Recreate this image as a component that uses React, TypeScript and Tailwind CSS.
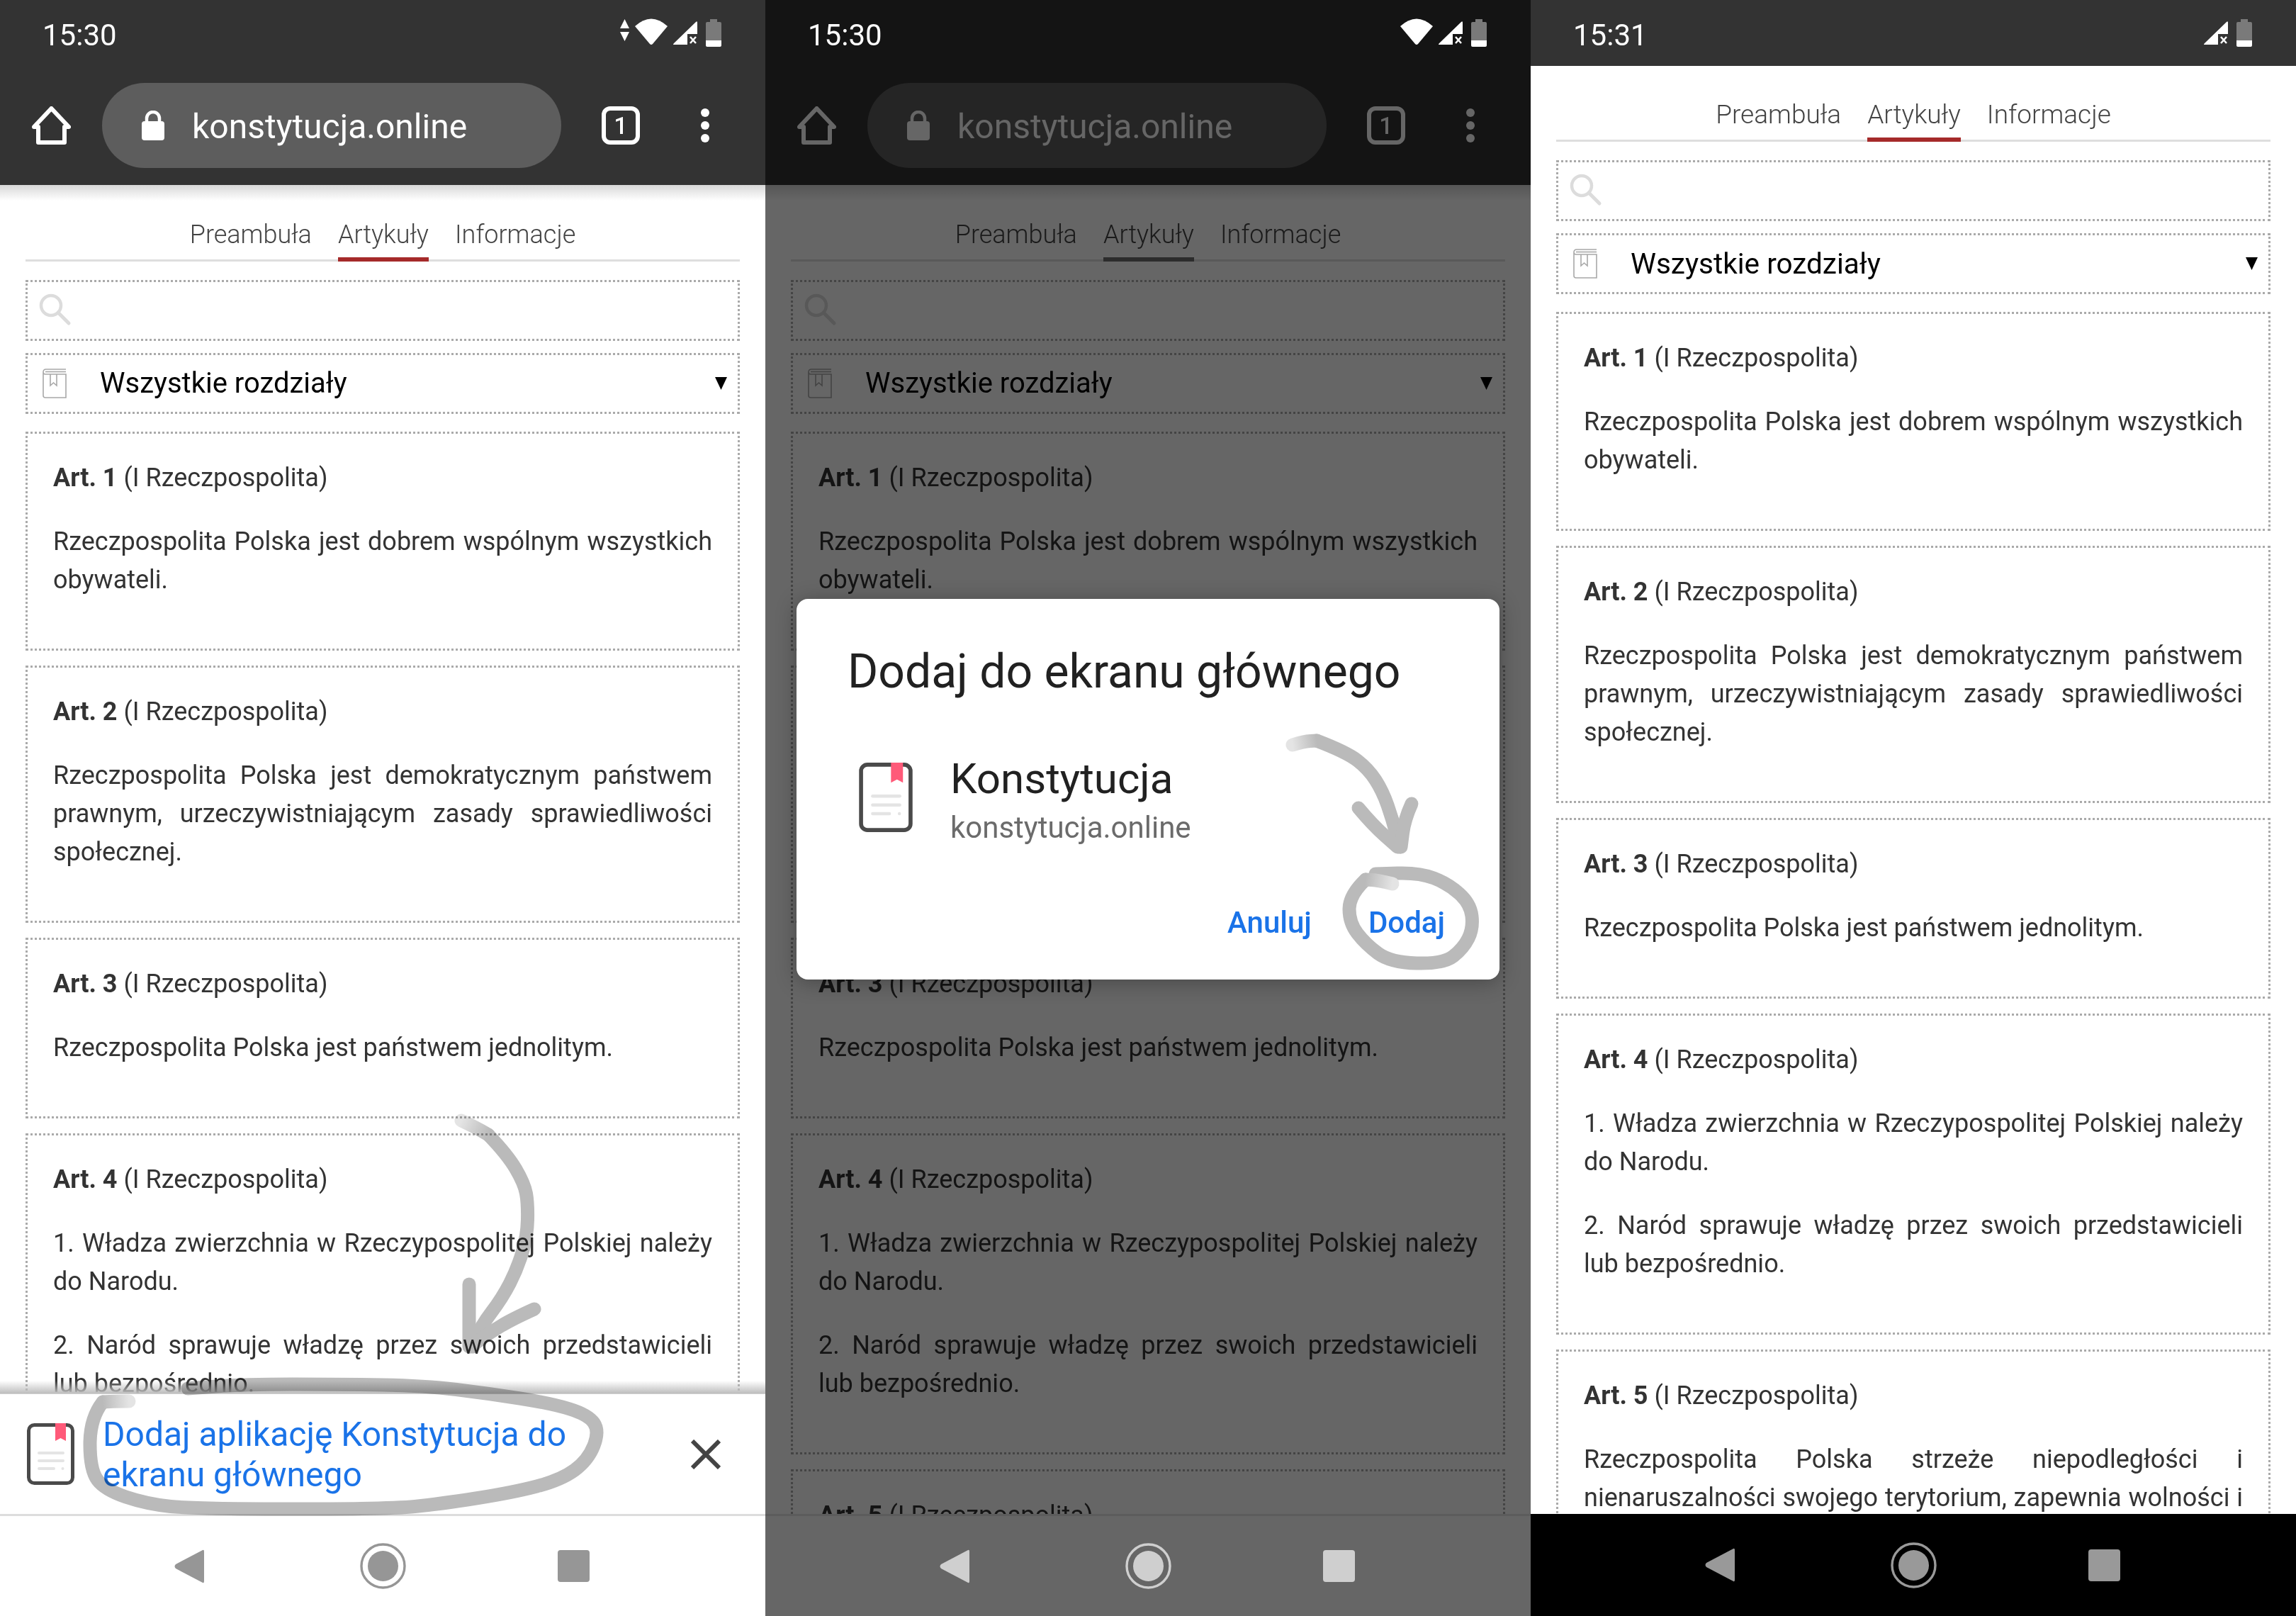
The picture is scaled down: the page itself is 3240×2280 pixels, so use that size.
import React from "react";

const smooth = (p: number[][]) => {
  let d = `M${p[0][0]} ${p[0][1]}`;
  for (let i = 1; i < p.length - 1; i++) {
    const mx = (p[i][0] + p[i + 1][0]) / 2;
    const my = (p[i][1] + p[i + 1][1]) / 2;
    d += ` Q${p[i][0]} ${p[i][1]} ${mx} ${my}`;
  }
  const l = p[p.length - 1];
  return d + ` L${l[0]} ${l[1]}`;
};

const articles = [
  { n: "Art. 1", p: ["Rzeczpospolita Polska jest dobrem wspólnym wszystkich obywateli."] },
  { n: "Art. 2", p: ["Rzeczpospolita Polska jest demokratycznym państwem prawnym, urzeczywistniającym zasady sprawiedliwości społecznej."] },
  { n: "Art. 3", p: ["Rzeczpospolita Polska jest państwem jednolitym."] },
  { n: "Art. 4", p: ["1. Władza zwierzchnia w Rzeczypospolitej Polskiej należy do Narodu.", "2. Naród sprawuje władzę przez swoich przedstawicieli lub bezpośrednio."] },
  { n: "Art. 5", p: ["Rzeczpospolita Polska strzeże niepodległości i nienaruszalności swojego terytorium, zapewnia wolności i prawa człowieka i obywatela oraz bezpieczeństwo obywateli."] },
];

function StatusIcons({ arrows = true, signalOnly = false }: { arrows?: boolean; signalOnly?: boolean }) {
  return (
    <svg width="180" height="70" viewBox="860 10 180 70" className="mr-[40px] -mt-[3px] shrink-0">
      {arrows && !signalOnly && <path d="M881.5 27 L888 40 H875 Z M875 45 H888 L881.5 58 Z" fill="#fff" />}
      {!signalOnly && <path d="M896 37 Q919 16 942 37 L921 62 Q919 64 917 62 Z" fill="#fff" />}
      <path d="M950 63 Q950 62 951 61 L982 31 Q984 29 984 32 V48 H970 V63 Z" fill="#fff" />
      <path d="M974 52 L982 61 M982 52 L974 61" stroke="#fff" strokeWidth="2.6" />
      <path d="M1002 27 H1012 V31 H1016 Q1018 31 1018 33 V57 H996 V33 Q996 31 998 31 H1002 Z" fill="#7a7a7a" />
      <path d="M996 57 H1018 V64 Q1018 66 1016 66 H998 Q996 66 996 64 Z" fill="#fff" />
    </svg>
  );
}

function AppIcon({ w, h }: { w: number; h: number }) {
  return (
    <svg width={w} height={h} viewBox="0 0 67 87" className="shrink-0">
      <rect x="2.5" y="2.5" width="62" height="82" rx="8" fill="#fff" stroke="#4a4a4a" strokeWidth="5" />
      <path d="M40 0 H55 V25 L47.5 21 L40 25 Z" fill="#ff5a79" />
      <rect x="15" y="40" width="38" height="4" rx="2" fill="#e4e4e4" />
      <rect x="15" y="51" width="38" height="4" rx="2" fill="#e4e4e4" />
      <rect x="15" y="62" width="25" height="4" rx="2" fill="#e4e4e4" />
      <circle cx="50.5" cy="64" r="2" fill="#e4e4e4" />
    </svg>
  );
}

function Toolbar() {
  return (
    <div className="flex h-[168px] items-center bg-[#333333]">
      <svg width="55" height="54" viewBox="0 0 55 54" className="ml-[45px] shrink-0">
        <path d="M27.5 3 L52 29 H46 V51 H9 V29 H3 Z" fill="none" stroke="#fff" strokeWidth="6" strokeLinejoin="round" />
      </svg>
      <div className="ml-[44px] flex h-[120px] w-[648px] shrink-0 items-center rounded-full bg-[#5d5d5d]">
        <svg width="32" height="42" viewBox="0 0 32 42" className="ml-[56px] shrink-0">
          <path d="M7 18 V11 A9 9 0 0 1 25 11 V18" fill="none" stroke="#fff" strokeWidth="4.5" />
          <rect x="0" y="15" width="32" height="27" rx="4" fill="#fff" />
        </svg>
        <span className="ml-[39px] mt-[4px] text-[48px] leading-none text-white">konstytucja.online</span>
      </div>
      <div className="ml-[57px] flex h-[54px] w-[54px] shrink-0 items-center justify-center rounded-[12px] border-[6px] border-white text-[34px] font-medium leading-none text-white">1</div>
      <div className="ml-[86px] flex shrink-0 flex-col gap-[6px]">
        <span className="h-[12px] w-[12px] rounded-full bg-white" />
        <span className="h-[12px] w-[12px] rounded-full bg-white" />
        <span className="h-[12px] w-[12px] rounded-full bg-white" />
      </div>
    </div>
  );
}

function Tab({ label, active, size, accent }: { label: string; active?: boolean; size: string; accent: string }) {
  return (
    <div className={`-mb-[3px] border-b-[6px] pb-[5px] leading-[54px] font-light text-[#444] ${size} ${active ? accent : "border-transparent"}`}>
      {label}
    </div>
  );
}

function Content({ tabSize, selectSize, top, accent }: { tabSize: string; selectSize: string; top: string; accent: string }) {
  return (
    <div className={`px-[36px] ${top}`}>
      <div className="flex justify-center gap-[37px] border-b-[3px] border-[#dedede]">
        <Tab label="Preambuła" size={tabSize} accent={accent} />
        <Tab label="Artykuły" active size={tabSize} accent={accent} />
        <Tab label="Informacje" size={tabSize} accent={accent} />
      </div>
      <div className="mt-[26px] flex h-[86px] items-start border-[3px] border-dotted border-[#aaaaaa] pl-[16px] pt-[16px]">
        <svg width="46" height="46" viewBox="0 0 46 46">
          <circle cx="17" cy="17" r="14" fill="none" stroke="#dcdcdc" strokeWidth="4.5" />
          <path d="M27 27 L42 42" stroke="#dcdcdc" strokeWidth="5" strokeLinecap="round" />
        </svg>
      </div>
      <div className="mt-[17px] flex h-[86px] items-center border-[3px] border-dotted border-[#aaaaaa] text-black">
        <svg width="34" height="42" viewBox="0 0 34 42" className="ml-[21px] shrink-0" fill="none" stroke="#a8a8a8" strokeWidth="1.6">
          <path d="M33 1 H5 Q1 1 1 5 V38 Q1 41 4 41 H33 V8 H4 Q1 8 1 5" />
          <path d="M4 4.5 H33" />
          <path d="M11 8 V24 L15.5 20 L20 24 V8" />
        </svg>
        <span className={`ml-[47px] flex-1 leading-none ${selectSize}`}>Wszystkie rozdziały</span>
        <svg width="17" height="18" viewBox="0 0 17 18" className="mr-[15px] shrink-0"><path d="M0 0 H17 L8.5 18 Z" fill="#000" /></svg>
      </div>
      <div className="mt-[25px] flex flex-col gap-[21px]">
        {articles.map((a) => (
          <div key={a.n} className="border-[3px] border-dotted border-[#aaaaaa] px-[36px] pt-[35px] text-[36px] leading-[54px] text-[#333]">
            <div className="mb-[36px]"><b className="font-bold">{a.n}</b> (I Rzeczpospolita)</div>
            {a.p.map((t) => (
              <p key={t} className="mb-[36px] text-justify">{t}</p>
            ))}
            <div className="h-[34px]" />
          </div>
        ))}
      </div>
    </div>
  );
}

function Nav({ bg, fill, line }: { bg: string; fill: string; line: string }) {
  return (
    <div className={`relative z-30 flex h-[144px] shrink-0 items-center pl-[246px] ${bg} ${line}`}>
      <svg width="42" height="48" viewBox="0 0 42 48" className="shrink-0"><path d="M40 1 Q42 0 42 3 V45 Q42 48 40 47 L2 27 Q-1 24 2 21 Z" fill={fill} /></svg>
      <svg width="65" height="65" viewBox="0 0 65 65" className="ml-[220px] shrink-0">
        <circle cx="32.5" cy="32.5" r="30.5" fill="none" stroke={fill} strokeWidth="3.4" />
        <circle cx="32.5" cy="32.5" r="21.5" fill={fill} />
      </svg>
      <div className="ml-[214px] h-[45px] w-[45px] shrink-0 rounded-[4px]" style={{ backgroundColor: fill }} />
    </div>
  );
}

function Strokes({ id, paths }: { id: string; paths: { pts: number[][]; fade?: number[][] }[] }) {
  return (
    <svg width="1080" height="2280" viewBox="0 0 1080 2280" className="pointer-events-none absolute left-0 top-0 z-40 mix-blend-multiply" fill="none">
      {paths.map((p, i) =>
        p.fade ? (
          <linearGradient key={i} id={`${id}${i}`} gradientUnits="userSpaceOnUse" x1={p.fade[0][0]} y1={p.fade[0][1]} x2={p.fade[p.fade.length - 1][0]} y2={p.fade[p.fade.length - 1][1]}>
            <stop offset="0" stopColor="#e4e4e4" />
            <stop offset="1" stopColor="#bababa" />
          </linearGradient>
        ) : null
      )}
      {paths.map((p, i) => (
        <React.Fragment key={i}>
          <path d={smooth(p.pts)} stroke="#bababa" strokeWidth="19" strokeLinecap="round" strokeLinejoin="round" />
          {p.fade && <path d={smooth(p.fade)} stroke={`url(#${id}${i})`} strokeWidth="19" strokeLinecap="round" strokeLinejoin="round" />}
        </React.Fragment>
      ))}
    </svg>
  );
}

function PhoneOne() {
  return (
    <div className="relative flex h-[2280px] w-[1080px] shrink-0 flex-col overflow-hidden bg-white">
      <div className="flex h-[93px] shrink-0 items-center justify-between bg-[#333333] pl-[60px] text-[42px] text-white">
        <span className="mt-[6px]">15:30</span>
        <StatusIcons />
      </div>
      <Toolbar />
      <div className="relative min-h-0 flex-1 overflow-hidden">
        <div className="absolute left-0 top-0 h-[22px] w-full bg-linear-to-b from-[#d8d8d8] to-white/0" />
        <div className="absolute bottom-0 left-0 z-10 h-[18px] w-full bg-linear-to-b from-white/0 to-[#bdbdbd]" />
        <Content tabSize="text-[36px]" selectSize="text-[40px]" top="pt-[43px]" accent="border-[#a52a2a]" />
      </div>
      <div className="relative z-20 flex h-[170px] shrink-0 items-center border-t border-[#d0d0d0] bg-white pl-[38px]">
        <AppIcon w={67} h={87} />
        <div className="ml-[40px] w-[700px] text-[48px] leading-[57px] text-[#1a73e8]">Dodaj aplikację Konstytucja do ekranu głównego</div>
        <svg width="42" height="42" viewBox="0 0 42 42" className="ml-[130px] shrink-0"><path d="M2 2 L40 40 M40 2 L2 40" stroke="#444" strokeWidth="6" /></svg>
      </div>
      <Nav bg="bg-white" fill="#969696" line="border-t-[3px] border-[#dddddd]" />
      <Strokes
        id="a"
        paths={[
          { pts: [[689, 1601], [716, 1629], [740, 1670], [745, 1698], [744, 1744], [730, 1790], [709, 1831], [678, 1872], [668, 1900]], fade: [[651, 1581], [670, 1590], [689, 1601]] },
          { pts: [[662, 1812], [662, 1860], [662, 1900]] },
          { pts: [[754, 1847], [723, 1861], [690, 1881], [664, 1900]] },
          { pts: [[145, 1978], [127, 2001], [127, 2074], [148, 2102], [207, 2122], [275, 2129], [551, 2129], [620, 2122], [723, 2106], [792, 2088], [830, 2060], [846, 2019], [830, 1996], [778, 1980], [689, 1966], [599, 1955], [482, 1953], [344, 1953], [265, 1959]], fade: [[182, 1977], [165, 1977], [145, 1978]] },
        ]}
      />
    </div>
  );
}

function PhoneTwo() {
  return (
    <div className="relative flex h-[2280px] w-[1080px] shrink-0 flex-col overflow-hidden bg-white">
      <div className="relative z-30 flex h-[93px] shrink-0 items-center justify-between bg-[#141414] pl-[60px] text-[42px] text-white">
        <span className="mt-[6px]">15:30</span>
        <StatusIcons arrows={false} />
      </div>
      <Toolbar />
      <div className="relative min-h-0 flex-1 overflow-hidden">
        <div className="absolute left-0 top-0 h-[22px] w-full bg-linear-to-b from-[#d8d8d8] to-white/0" />
        <Content tabSize="text-[36px]" selectSize="text-[40px]" top="pt-[43px]" accent="border-[#6e6e6e]" />
      </div>
      <Nav bg="bg-[#666666]" fill="#cfcfcf" line="border-t-[3px] border-[#5c5c5c]" />
      <div className="absolute inset-x-0 bottom-[144px] top-[93px] z-10 bg-black/60" />
      <div className="absolute left-[44px] top-[845px] z-20 h-[537px] w-[992px] rounded-[16px] bg-white text-[#212121] shadow-[0_4px_30px_rgba(0,0,0,0.3)]">
        <div className="pl-[72px] pt-[68px] text-[66px] leading-[70px]">Dodaj do ekranu głównego</div>
        <div className="flex pl-[88px] pt-[93px]">
          <AppIcon w={76} h={98} />
          <div className="ml-[53px] -mt-[12px]">
            <div className="text-[60px] leading-[70px]">Konstytucja</div>
            <div className="mt-[8px] text-[42px] leading-[52px] text-[#6b6b6b]">konstytucja.online</div>
          </div>
        </div>
        <div className="flex justify-end gap-[80px] pr-[77px] pt-[83px] text-[42px] font-medium leading-[50px] text-[#1a73e8]">
          <span>Anuluj</span>
          <span>Dodaj</span>
        </div>
      </div>
      <Strokes
        id="b"
        paths={[
          { pts: [[778, 1045], [820, 1061], [851, 1085], [871, 1116], [885, 1156], [895, 1195]], fade: [[744, 1051], [760, 1046], [778, 1045]] },
          { pts: [[837, 1140], [857, 1164], [892, 1195]] },
          { pts: [[912, 1134], [902, 1156], [897, 1195]] },
          { pts: [[847, 1241], [824, 1263], [824, 1302], [847, 1332], [882, 1358], [957, 1360], [985, 1338], [999, 1310], [995, 1275], [964, 1247], [923, 1231], [861, 1233]], fade: [[885, 1247], [865, 1242], [847, 1241]] },
        ]}
      />
    </div>
  );
}

function PhoneThree() {
  return (
    <div className="relative flex h-[2280px] w-[1080px] shrink-0 flex-col overflow-hidden bg-white">
      <div className="flex h-[93px] shrink-0 items-center justify-between bg-[#333333] pl-[60px] text-[42px] text-white">
        <span className="mt-[6px]">15:31</span>
        <StatusIcons signalOnly />
      </div>
      <div className="min-h-0 flex-1 overflow-hidden">
        <Content tabSize="text-[37px]" selectSize="text-[40.5px]" top="pt-[42px]" accent="border-[#a52a2a]" />
      </div>
      <Nav bg="bg-black" fill="#999999" line="" />
    </div>
  );
}

export default function App() {
  return (
    <div className="flex h-[2280px] w-[3240px] overflow-hidden font-['Roboto',sans-serif]">
      <PhoneOne />
      <PhoneTwo />
      <PhoneThree />
    </div>
  );
}
